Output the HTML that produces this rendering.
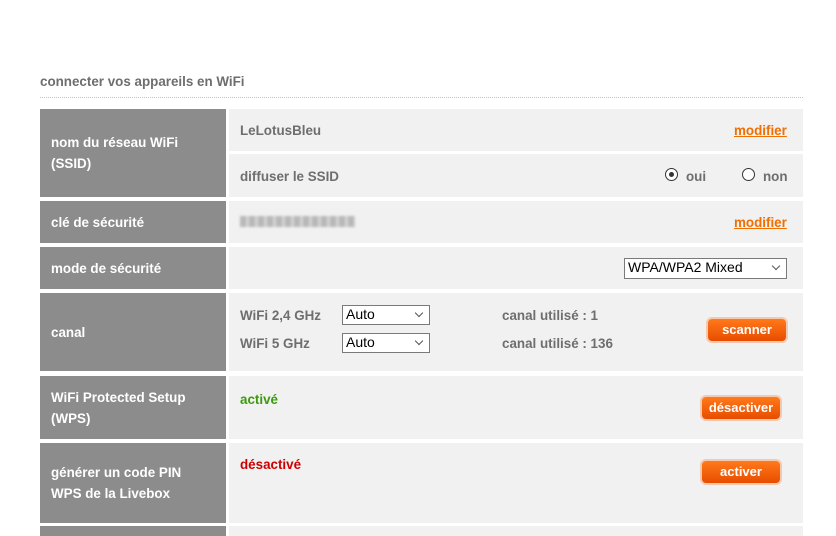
<!DOCTYPE html>
<html><head><meta charset="utf-8"><style>
body{margin:0;width:836px;height:527px;background:#fff;position:relative;overflow:hidden;font-family:"Liberation Sans",Arial,sans-serif;font-weight:bold;font-size:13.4px}
.a{position:absolute}
.l{position:absolute;left:40px;width:186px;background:#8c8c8c;color:#fff;box-sizing:border-box;padding-left:11px;display:flex;align-items:center;line-height:21px}
.r{position:absolute;left:229px;width:574px;background:#f1f1f1}
.t{position:absolute;color:#6e6e6e}
.lnk{position:absolute;color:#f16e00;text-decoration:underline}
.sel{position:absolute;background:#fff;border:1px solid #7a7a7a;font-weight:normal;font-size:14px;color:#000;box-sizing:border-box;padding-left:3px;line-height:17px}
.sel:after{content:"";position:absolute;right:7px;top:4px;width:5px;height:5px;border-right:1px solid #555;border-bottom:1px solid #555;transform:rotate(45deg)}
.btn{position:absolute;background:linear-gradient(#ff7a1a,#e84c00);color:#fff;border-radius:4px;box-shadow:0 0 0 2px #f5c9b0;text-align:center;font-size:13px;line-height:22px}
.rad{position:absolute;width:11px;height:11px;border:1px solid #333;border-radius:50%;background:#fff}
</style></head><body>
<div class="t" style="left:40px;top:74px;color:#6e6e6e">connecter vos appareils en WiFi</div>
<div class="a" style="left:40px;top:97px;width:763px;border-top:1px dotted #f3b888"></div>

<div class="l" style="top:109px;height:88px">nom du réseau WiFi<br>(SSID)</div>
<div class="r" style="top:109px;height:42px"></div>
<div class="t" style="left:240px;top:123px">LeLotusBleu</div>
<div class="lnk" style="left:734px;top:123px">modifier</div>
<div class="r" style="top:154px;height:43px"></div>
<div class="t" style="left:240px;top:169px">diffuser le SSID</div>
<div class="rad" style="left:665px;top:168px"><div style="position:absolute;left:3px;top:3px;width:5px;height:5px;border-radius:50%;background:#333"></div></div>
<div class="t" style="left:686px;top:169px">oui</div>
<div class="rad" style="left:742px;top:168px"></div>
<div class="t" style="left:763px;top:169px">non</div>

<div class="l" style="top:201px;height:42px">clé de sécurité</div>
<div class="r" style="top:201px;height:42px"></div>
<div class="a" style="left:240px;top:216px;width:115px;height:11px;background:repeating-linear-gradient(90deg,#b8b8b8 0 6px,#d4d4d4 6px 9px);filter:blur(1.2px)"></div>
<div class="lnk" style="left:734px;top:215px">modifier</div>

<div class="l" style="top:247px;height:42px">mode de sécurité</div>
<div class="r" style="top:247px;height:42px"></div>
<div class="sel" style="left:624px;top:258px;width:163px;height:21px">WPA/WPA2 Mixed</div>

<div class="l" style="top:293px;height:78px">canal</div>
<div class="r" style="top:293px;height:78px"></div>
<div class="t" style="left:240px;top:308px">WiFi 2,4 GHz</div>
<div class="sel" style="left:342px;top:305px;width:88px;height:20px">Auto</div>
<div class="t" style="left:240px;top:336px">WiFi 5 GHz</div>
<div class="sel" style="left:342px;top:333px;width:88px;height:20px">Auto</div>
<div class="t" style="left:502px;top:308px">canal utilisé : 1</div>
<div class="t" style="left:502px;top:336px">canal utilisé : 136</div>
<div class="btn" style="left:708px;top:319px;width:78px">scanner</div>

<div class="l" style="top:376px;height:63px">WiFi Protected Setup<br>(WPS)</div>
<div class="r" style="top:376px;height:63px"></div>
<div class="t" style="left:240px;top:392px;color:#3c9a10">activé</div>
<div class="btn" style="left:702px;top:397px;width:78px">désactiver</div>

<div class="l" style="top:443px;height:80px">générer un code PIN<br>WPS de la Livebox</div>
<div class="r" style="top:443px;height:80px"></div>
<div class="t" style="left:240px;top:457px;color:#cd0000">désactivé</div>
<div class="btn" style="left:702px;top:461px;width:78px">activer</div>
<div class="l" style="top:526px;height:10px"></div>
<div class="r" style="top:526px;height:10px"></div>
</body></html>
